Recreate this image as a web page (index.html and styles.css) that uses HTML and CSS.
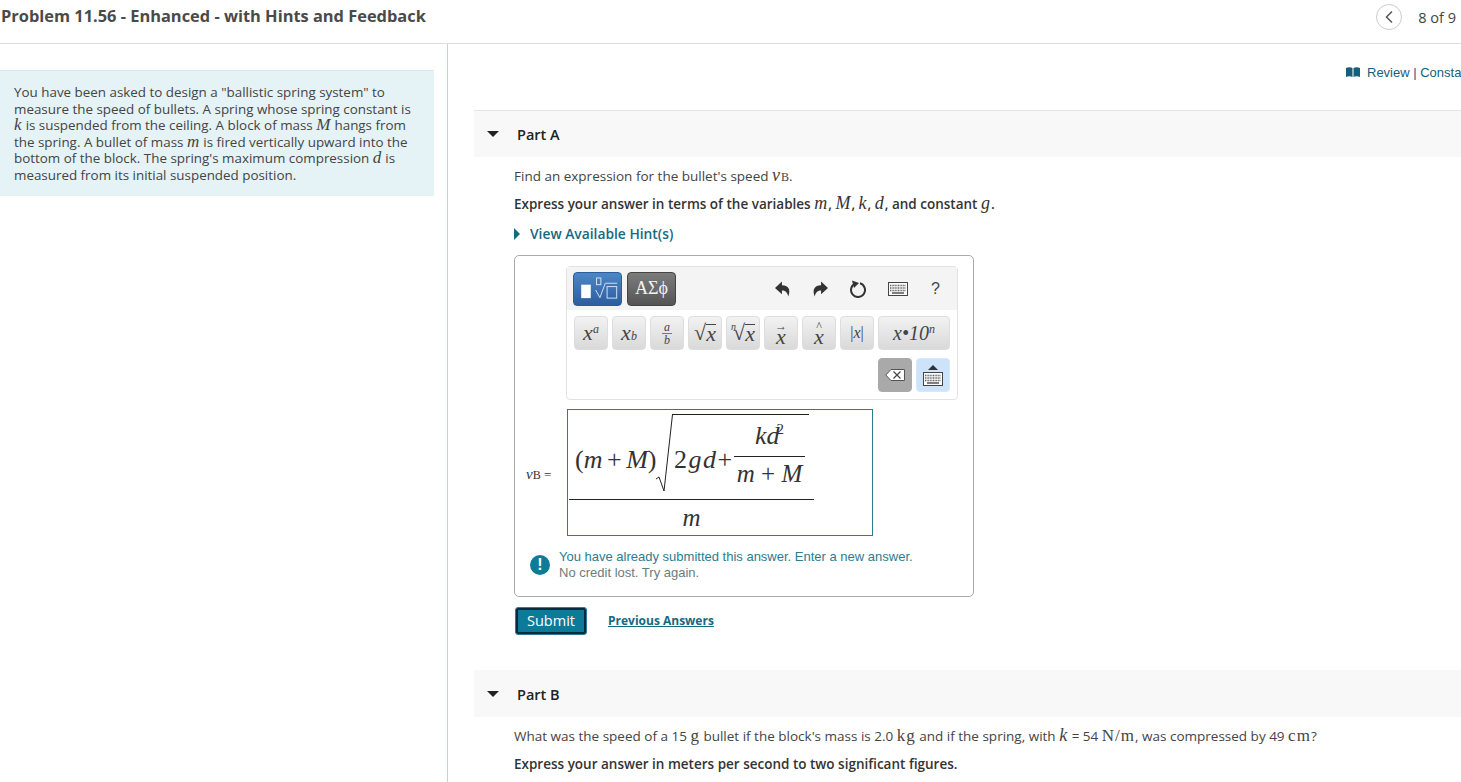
FILE: index.html
```html
<!DOCTYPE html>
<html lang="en">
<head>
  <meta charset="UTF-8">
  <title>Problem 11.56 - Enhanced - with Hints and Feedback</title>
  <link rel="stylesheet" href="styles.css">
</head>
<body>

  <svg class="defs" width="0" height="0">
    <symbol id="keys" viewBox="0 0 20 14">
      <rect x="0.5" y="0.5" width="19" height="13" fill="#fafafa" stroke="#444"/>
      <path d="M2 3.5h16M2 6h16M2 8.500h16" stroke="#666" stroke-width="1.400" stroke-dasharray="1 .6"/>
      <path d="M4 11h12" stroke="#555" stroke-width="1.500"/>
    </symbol>
  </svg>

  <header class="top">
    <h1>Problem 11.56 - Enhanced - with Hints and Feedback</h1>
    <div class="pager">
      <span class="prev">
        <svg width="10" height="14" viewBox="0 0 10 14"><path d="M8 1.500 2.500 7 8 12.500" fill="none" stroke="#555" stroke-width="1.500"/></svg>
      </span>
      <span>8 of 9</span>
    </div>
  </header>

  <div class="cols">
    <aside class="left">
      <div class="intro">
        You have been asked to design a "ballistic spring system" to measure the speed of bullets. A spring whose spring constant is <i class="v">k</i> is suspended from the ceiling. A block of mass <i class="v">M</i> hangs from the spring. A bullet of mass <i class="v">m</i> is fired vertically upward into the bottom of the block. The spring's maximum compression <i class="v">d</i> is measured from its initial suspended position.
      </div>
    </aside>

    <main class="right">
      <div class="review">
        <svg class="book" width="14" height="10" viewBox="0 0 14 10"><path d="M0 1c2-1 5-1 6.500 0v9C5 9 2 9 0 10zM14 1c-2-1-5-1-6.500 0v9C9 9 12 9 14 10z" fill="#14607c"/></svg>
        <span>Review | Constants</span>
      </div>

      <div class="part-bar"><span class="caret"></span>Part A</div>
      <div class="part">
        <p class="q q-first">Find an expression for the bullet's speed <i class="v">v</i><span class="sub">B</span>.</p>
        <p class="q q-bold">Express your answer in terms of the variables <i class="v">m</i>, <i class="v">M</i>, <i class="v">k</i>, <i class="v">d</i>, and constant <i class="v">g</i>.</p>
        <div class="hint"><span class="caret-r"></span>View Available Hint(s)</div>

        <div class="answer">
          <div class="tools">
            <div class="tool-top">
              <span class="tab tab-on">
                <svg width="49" height="34" viewBox="0 0 49 34">
                  <rect x="7.500" y="12.500" width="10" height="14" fill="#fff"/>
                  <path d="M22.600 18 27 26 32.600 11H45" fill="none" stroke="#d5e3f5" stroke-width="1"/>
                  <rect x="23.500" y="5.500" width="4.500" height="7" fill="none" stroke="#d5e3f5"/>
                  <rect x="34.500" y="14.500" width="10" height="12" fill="none" stroke="#d5e3f5"/>
                </svg>
              </span>
              <span class="tab tab-off">ΑΣϕ</span>
              <div class="actions">
                <svg width="16" height="16" viewBox="0 0 15 15"><path d="M6.500 .5 0 6.500l6.500 6V9c3 0 5 1.500 6 5.500C15 8 12.500 4 6.500 4z" fill="#333"/></svg>
                <svg width="16" height="16" viewBox="0 0 15 15"><path d="M8.500 .5 15 6.500l-6.500 6V9c-3 0-5 1.500-6 5.500C0 8 2.500 4 8.500 4z" fill="#333"/></svg>
                <svg width="18" height="18" viewBox="0 0 18 18"><path d="M11 3.300a7 7 0 1 1-5 .4" fill="none" stroke="#333" stroke-width="2"/><path d="M3 .5l7 2.500-5 5z" fill="#333"/></svg>
                <svg width="20" height="14"><use href="#keys"/></svg>
                <span class="help">?</span>
              </div>
            </div>
            <div class="btn-row">
              <span class="mbtn"><i>x</i><sup>a</sup></span>
              <span class="mbtn"><i>x</i><sub>b</sub></span>
              <span class="mbtn"><span class="fr"><i>a</i><i class="fr-b">b</i></span></span>
              <span class="mbtn">√<i class="over">x</i></span>
              <span class="mbtn"><sup class="root-n">n</sup>√<i class="over">x</i></span>
              <span class="mbtn"><span class="acc"><small>→</small><i>x</i></span></span>
              <span class="mbtn"><span class="acc"><small>^</small><i>x</i></span></span>
              <span class="mbtn mbtn-abs">|<i>x</i>|</span>
              <span class="mbtn mbtn-wide"><i>x•10</i><sup>n</sup></span>
            </div>
            <div class="btn-row btn-row-end">
              <span class="mbtn mbtn-del">
                <svg width="20" height="12" viewBox="0 0 20 12"><path d="M6 .5h13.500v11H6L.8 6z" fill="#fff" stroke="#555"/><path d="m8.500 2.500 7 7m0-7-7 7" stroke="#444" stroke-width="1.200"/></svg>
              </span>
              <span class="mbtn mbtn-kb">
                <svg class="up" width="10" height="5" viewBox="0 0 10 5"><path d="M5 0l5 5H0z" fill="#333"/></svg>
                <svg width="20" height="14"><use href="#keys"/></svg>
              </span>
            </div>
          </div>

          <div class="eq-row">
            <span class="eq-label"><i class="v">v</i><span class="sub">B</span> =</span>
            <div class="eq-box">
              <div class="frac-main">
                <div class="eq-num">
                  <span class="paren">(<i>m</i> + <i>M</i>)</span>
                  <svg class="radical" width="17" height="80" viewBox="0 0 17 80"><path d="M0 65 3 63 8 77 16.500 .5" fill="none" stroke="#222" stroke-width="1"/></svg>
                  <div class="radicand">
                    <span class="two-gd">2<i>gd</i>+</span>
                    <div class="frac-in">
                      <span class="frac-top"><i>kd</i><sup>2</sup></span>
                      <span class="frac-bot"><i>m</i> + <i>M</i></span>
                    </div>
                  </div>
                </div>
                <div class="eq-den"><i>m</i></div>
              </div>
            </div>
          </div>

          <div class="msg">
            <span class="msg-icon">!</span>
            <div>
              <div class="msg-main">You have already submitted this answer. Enter a new answer.</div>
              <div class="msg-sub">No credit lost. Try again.</div>
            </div>
          </div>
        </div>

        <div class="submit-row">
          <button class="submit">Submit</button>
          <a class="prev-link">Previous Answers</a>
        </div>
      </div>

      <div class="part-bar part-bar-b"><span class="caret"></span>Part B</div>
      <div class="part part-b">
        <p class="q q-first">What was the speed of a 15 <span class="u">g</span> bullet if the block's mass is 2.0 <span class="u">kg</span> and if the spring, with <i class="v">k</i> = 54 <span class="u">N/m</span>, was compressed by 49 <span class="u">cm</span>?</p>
        <p class="q q-bold">Express your answer in meters per second to two significant figures.</p>
      </div>
    </main>
  </div>

</body>
</html>
```

FILE: styles.css
```css
html, body {
  height: 100%;
}
body {
  margin: 0;
  overflow: hidden;
  font-family: "Open Sans", Arial, sans-serif;
  font-size: 14px;
  color: #333;
  background-color: #fff;
}
.defs {
  position: absolute;
}

/* header */
.top {
  display: flex;
  justify-content: space-between;
  align-items: center;
  height: 44px;
  padding: 0 5px 11px 1px;
  box-sizing: border-box;
  border-bottom: 1px solid #ddd;
}
h1 {
  margin: 0 0 2px;
  font-size: 16.400px;
  font-weight: 700;
  color: #4a4a4a;
}
.pager {
  display: flex;
  align-items: center;
  gap: 16px;
  font-size: 14.500px;
  color: #444;
  padding-top: 2px;
}
.prev {
  display: flex;
  align-items: center;
  justify-content: center;
  width: 26px;
  height: 26px;
  border: 1px solid #ccc;
  border-radius: 50%;
  box-sizing: border-box;
}

/* columns */
.cols {
  display: flex;
  height: 738px;
}
.left {
  flex: none;
  width: 447px;
  padding-top: 26px;
  border-right: 1px solid #bcd6e2;
}
.intro {
  width: 434px;
  height: 126px;
  box-sizing: border-box;
  padding: 13px 14px 0;
  line-height: 16.600px;
  font-size: 13.400px;
  color: #444;
  background-color: #e5f3f6;
  border-top: 1px solid #d5e8ec;
}
.v {
  font-family: "Liberation Serif", serif;
  font-style: italic;
  font-size: 18px;
  letter-spacing: 1px;
  line-height: 0;
}
.intro .v {
  font-size: 17px;
  letter-spacing: .6px;
}
.sub {
  font-family: "Liberation Serif", serif;
  font-size: 12px;
}
.u {
  font-family: "Liberation Serif", serif;
  font-size: 17px;
  letter-spacing: 1px;
  line-height: 0;
}

.right {
  flex: 1;
  min-width: 0;
  padding-left: 26px;
  overflow: hidden;
}
.review {
  display: flex;
  align-items: center;
  gap: 7px;
  height: 20px;
  margin: 18px 0 28px 872px;
  white-space: nowrap;
  font-family: "Liberation Sans", Arial, sans-serif;
  font-size: 13px;
  color: #14607c;
}
.book {
  flex: none;
}

/* parts */
.part-bar {
  display: flex;
  align-items: center;
  height: 46px;
  border-top: 1px solid #e4e4e4;
  background-color: #f8f8f8;
  font-weight: 600;
  font-size: 14.500px;
  color: #222;
}
.part-bar-b {
  margin-top: 35px;
  border-top-color: #f8f8f8;
}
.caret {
  width: 0;
  height: 0;
  margin: 0 18px 0 13px;
  border-left: 6px solid transparent;
  border-right: 6px solid transparent;
  border-top: 6px solid #222;
}
.part {
  padding-left: 40px;
}
.q {
  margin: 0;
  font-size: 13.500px;
  line-height: 20px;
  color: #444;
}
.q-first {
  padding-top: 9px;
}
.q-bold {
  margin-top: 7px;
  font-weight: 600;
  color: #333;
}
.part-b .q-bold {
  margin-top: 8px;
}
.q .v {
  font-weight: 400;
}
.hint {
  display: flex;
  align-items: center;
  margin-top: 10px;
  font-weight: 600;
  font-size: 13.800px;
  line-height: 20px;
  color: #16697f;
}
.caret-r {
  width: 0;
  height: 0;
  margin-right: 10px;
  border-top: 6px solid transparent;
  border-bottom: 6px solid transparent;
  border-left: 6px solid #16697f;
}

/* answer box */
.answer {
  width: 460px;
  height: 342px;
  margin-top: 11px;
  box-sizing: border-box;
  padding: 10px 0 0 51px;
  border: 1px solid #aaa;
  border-radius: 5px;
}
.tools {
  width: 392px;
  height: 134px;
  box-sizing: border-box;
  border: 1px solid #e2e2e2;
  border-radius: 4px;
}
.tool-top {
  display: flex;
  align-items: center;
  gap: 5px;
  height: 43px;
  padding-left: 6px;
  background-color: #f4f4f4;
}
.tab {
  display: flex;
  align-items: center;
  justify-content: center;
  width: 49px;
  height: 34px;
  box-sizing: border-box;
  border-radius: 4px;
}
.tab-on {
  background: linear-gradient(#4d86c6, #2c5d9f);
  border: 1px solid #2c5d9f;
}
.tab-off {
  background: linear-gradient(#7c7c7c, #555);
  border: 1px solid #444;
  color: #f2f2f2;
  font-family: "Liberation Serif", serif;
  font-size: 18px;
}
.actions {
  display: flex;
  align-items: center;
  margin-left: 94px;
  gap: 21px;
}
.help {
  margin-left: 2px;
  font-family: "Liberation Sans", Arial, sans-serif;
  font-size: 16px;
  color: #444;
}
.btn-row {
  display: flex;
  gap: 4px;
  padding: 6px 0 0 7px;
}
.btn-row-end {
  padding: 8px 7px 0 0;
  justify-content: flex-end;
}
.mbtn {
  display: flex;
  align-items: center;
  justify-content: center;
  width: 34px;
  height: 34px;
  box-sizing: border-box;
  border: 1px solid #ddd;
  border-radius: 4px;
  background: linear-gradient(#f2f2f2, #d9d9d9);
  font-family: "Liberation Serif", serif;
  font-size: 22px;
  color: #444;
}
.mbtn sup {
  font-size: 12px;
  font-style: italic;
  align-self: flex-start;
  margin-top: 5px;
}
.mbtn sub {
  font-size: 12px;
  font-style: italic;
  align-self: flex-end;
  margin-bottom: 5px;
}
.mbtn .root-n {
  margin-top: 4px;
  margin-right: -3px;
  font-size: 10px;
}
.over {
  border-top: 1px solid #444;
  line-height: 18px;
  font-size: 22px;
}
.fr {
  display: flex;
  flex-direction: column;
  align-items: center;
  font-size: 12px;
  line-height: 12px;
}
.fr-b {
  border-top: 1px solid #777;
  padding: 0 2px;
}
.acc {
  display: flex;
  flex-direction: column;
  align-items: center;
  line-height: 14px;
  font-size: 22px;
}
.acc small {
  font-size: 12px;
  line-height: 8px;
}
.mbtn-abs {
  font-size: 16px;
}
.mbtn-wide {
  width: 72px;
  font-size: 20px;
}
.mbtn-del {
  background: #a9a9a9;
  border-color: #a9a9a9;
}
.mbtn-kb {
  flex-direction: column;
  gap: 2px;
  background: #cde3fa;
  border-color: #d6e8fb;
}

/* equation */
.eq-row {
  display: flex;
  align-items: center;
  margin: 9px 0 0 -40px;
}
.eq-label {
  flex: none;
  width: 41px;
  box-sizing: border-box;
  font-family: "Liberation Serif", serif;
  font-size: 13px;
  white-space: nowrap;
  padding-top: 4px;
}
.eq-label .v {
  font-size: 15px;
  letter-spacing: 0;
}
.eq-box {
  width: 306px;
  height: 127px;
  box-sizing: border-box;
  padding-left: 1px;
  border: 1px solid #2b7c8c;
  font-family: "Liberation Serif", serif;
  font-size: 26px;
  color: #333;
}
.frac-main {
  width: 245px;
}
.eq-num {
  display: flex;
  height: 90px;
  padding: 4px 0 0 6px;
  box-sizing: border-box;
  border-bottom: 1px solid #222;
}
.paren {
  width: 81px;
  margin-top: 31px;
  line-height: 30px;
  white-space: nowrap;
  word-spacing: -2px;
}
.radical {
  flex: none;
}
.radicand {
  display: flex;
  height: 74px;
  padding-right: 4px;
  border-top: 1px solid #222;
  margin-left: -1px;
}
.two-gd {
  flex: none;
  width: 58px;
  margin: 30px 0 0 2px;
  line-height: 30px;
  white-space: nowrap;
  letter-spacing: 1.500px;
}
.frac-in {
  flex: none;
  display: flex;
  flex-direction: column;
  align-items: center;
  width: 71px;
  margin-left: 2px;
}
.frac-top {
  height: 42px;
  box-sizing: border-box;
  width: 100%;
  text-align: center;
  padding-top: 6px;
  line-height: 30px;
  border-bottom: 1px solid #222;
}
.frac-top sup {
  font-size: 15px;
  line-height: 0;
  margin-left: -3px;
}
.frac-bot {
  line-height: 30px;
  margin-top: 2px;
  white-space: nowrap;
  font-size: 25px;
}
.eq-den {
  text-align: center;
  line-height: 35px;
  font-size: 25px;
}

/* feedback */
.msg {
  display: flex;
  align-items: center;
  gap: 9px;
  margin: 13px 0 0 -36px;
  font-family: "Liberation Sans", Arial, sans-serif;
  font-size: 13px;
  line-height: 16px;
}
.msg-icon {
  flex: none;
  width: 20px;
  height: 20px;
  border-radius: 50%;
  background-color: #0c7c99;
  color: #fff;
  font-weight: 700;
  font-size: 16px;
  line-height: 20px;
  text-align: center;
}
.msg-main {
  color: #2c7c90;
}
.msg-sub {
  color: #6d7b80;
}
.submit-row {
  display: flex;
  align-items: center;
  gap: 21px;
  margin: 10px 0 0 1px;
}
.submit {
  width: 72px;
  height: 28px;
  padding: 0 0 2px;
  box-sizing: border-box;
  border: 1px solid #2b7f95;
  border-radius: 3px;
  box-shadow: inset 0 0 0 2px #0c2a3a;
  outline: none;
  background-color: #0d7a9a;
  color: #fff;
  font-family: "Open Sans", Arial, sans-serif;
  font-size: 14.500px;
  cursor: pointer;
}
.prev-link {
  margin-bottom: 2px;
  font-size: 12px;
  font-weight: 700;
  color: #16697f;
  text-decoration: underline;
}
```
